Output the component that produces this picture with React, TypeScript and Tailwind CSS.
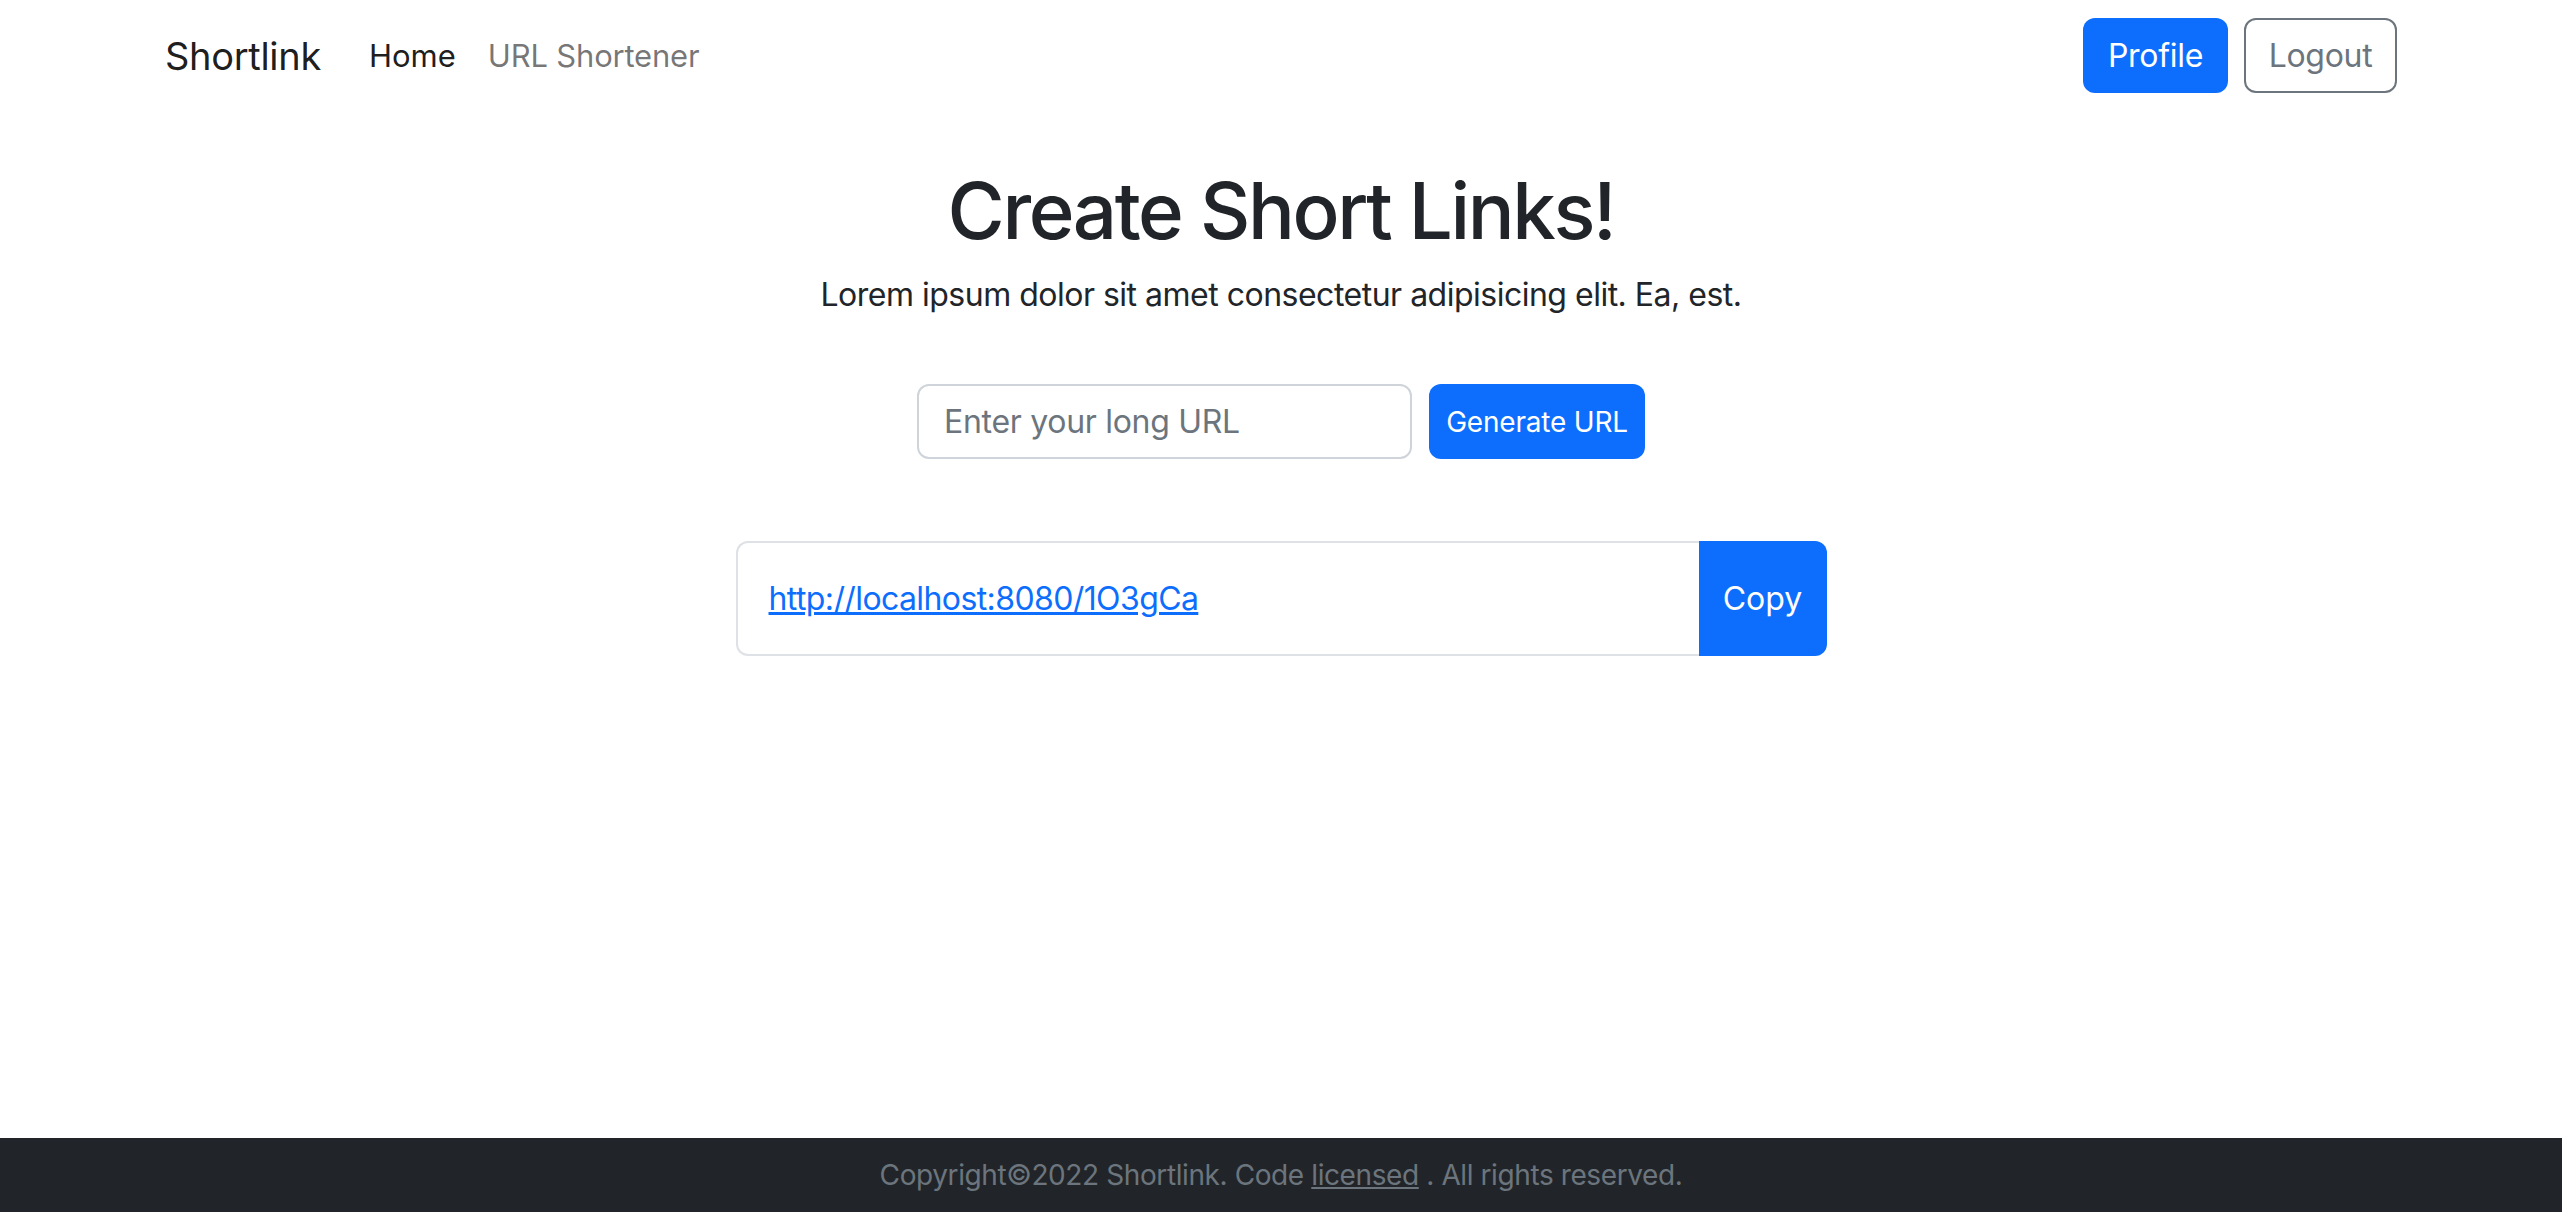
import React from 'react'

const font = { fontFamily: 'Inter, "Noto Sans", "Liberation Sans", sans-serif' }

function Navbar() {
  return (
    <nav className="px-[165px] py-[18px]">
      <div className="flex items-center justify-between">
        <div className="flex items-center">
          <a className="mr-[32px] text-[38px] leading-[60px] tracking-[-0.3px] text-black/90" href="#">
            Shortlink
          </a>
          <a className="px-[16px] text-[31px] leading-[48px] text-black/90" href="#">
            Home
          </a>
          <a className="px-[16px] text-[31px] leading-[48px] tracking-[-0.2px] text-black/55" href="#">
            URL Shortener
          </a>
        </div>
        <div className="flex items-center gap-[16px]">
          <button className="h-[75px] w-[145px] rounded-[12px] bg-[#0d6efd] text-[32px] tracking-[-0.3px] text-white">
            Profile
          </button>
          <button className="h-[75px] w-[153px] rounded-[12px] border-2 border-[#6c757d] text-[32px] tracking-[-0.3px] text-[#6c757d]">
            Logout
          </button>
        </div>
      </div>
    </nav>
  )
}

function Footer() {
  return (
    <footer className="flex h-[74px] items-center justify-center bg-[#212529]">
      <p className="text-[28px] tracking-[-0.4px] text-[#6c757d]">
        Copyright©2022 Shortlink. Code{' '}
        <a className="underline" href="#">
          licensed
        </a>{' '}
        . All rights reserved.
      </p>
    </footer>
  )
}

export default function App() {
  return (
    <div className="flex min-h-screen flex-col bg-white text-[#212529]" style={font}>
      <Navbar />
      <main className="flex flex-1 flex-col items-center">
        <h1 className="mt-[52px] text-[78px] font-medium leading-[96px] tracking-[-2.4px]">
          Create Short Links!
        </h1>
        <p className="mt-[12px] text-[32px] leading-[48px] tracking-[-0.5px] text-[#212529]">
          Lorem ipsum dolor sit amet consectetur adipisicing elit. Ea, est.
        </p>
        <div className="mt-[65px] flex gap-[17px]">
          <input
            className="h-[75px] w-[495px] rounded-[12px] border-2 border-[#ced4da] px-[25px] text-[32px] tracking-[-0.3px] outline-none placeholder:text-[#6c757d]"
            placeholder="Enter your long URL"
          />
          <button className="h-[75px] w-[216px] rounded-[12px] bg-[#0d6efd] text-[28px] tracking-[-0.2px] text-white">
            Generate URL
          </button>
        </div>
        <div className="mt-[82px] flex h-[115px] w-[1091px]">
          <div className="flex flex-1 items-center rounded-l-[12px] border-2 border-r-0 border-[#dee2e6] px-[31px]">
            <a className="text-[32px] tracking-[-0.6px] text-[#0d6efd] underline" href="#">
              http://localhost:8080/1O3gCa
            </a>
          </div>
          <button className="w-[128px] rounded-r-[12px] bg-[#0d6efd] text-[32px] text-white">
            Copy
          </button>
        </div>
      </main>
      <Footer />
    </div>
  )
}
